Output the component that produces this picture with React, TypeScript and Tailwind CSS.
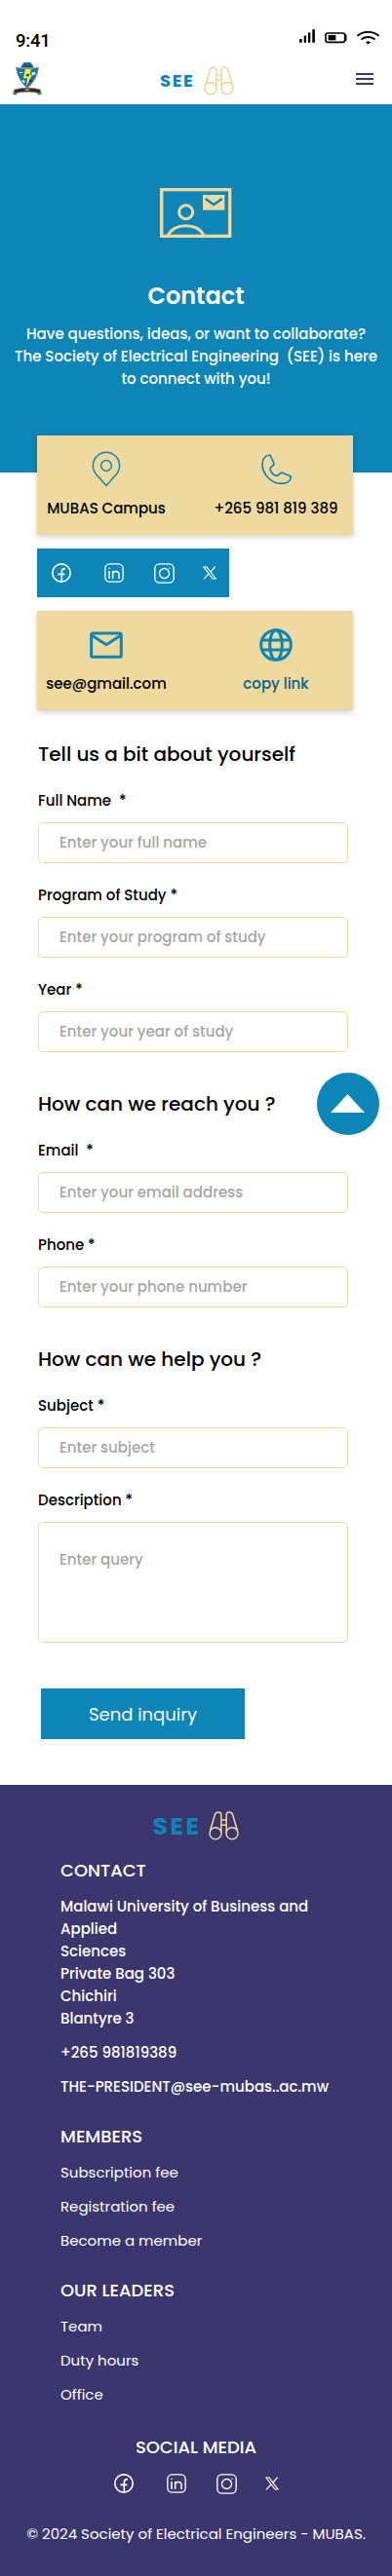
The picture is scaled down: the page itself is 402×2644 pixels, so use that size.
import type { ReactNode } from "react";

function Binoculars({ className, weight }: { className: string; weight: number }) {
  return (
    <svg viewBox="0 0 92 90" className={className} fill="none" stroke="#eed99f" strokeWidth={weight} strokeLinejoin="round">
      <path d="M4 60 19 10C21 4 26 3 30 3c6 0 8 4 8 9v55M88 60 73 10C71 4 66 3 62 3c-6 0-8 4-8 9v55M38 27h16M38 43h16" />
      <circle cx="20.5" cy="68" r="18" />
      <circle cx="71.5" cy="68" r="18" />
    </svg>
  );
}

function Crest() {
  return (
    <svg viewBox="0 0 88 101" className="h-[34px] w-[30px]">
      <path d="M1 88l11-3v14H1zM87 88l-11-3v14h11z" fill="#2378ad" />
      <path d="M34 0h20l4 6 7 11H23l7-11z" fill="#1673b4" />
      <path d="M30 8h28M27 13h34" stroke="#174d76" strokeWidth="3" />
      <path d="M10 15c20 6 48 6 68 0-2 24-14 47-34 64C24 62 12 39 10 15z" fill="#1173b8" stroke="#c08a4e" strokeWidth="2.5" />
      <path d="M38 21h18l-5 17h8L41 73l3-25H32z" fill="#f5ee2a" />
      <circle cx="45" cy="39" r="4" fill="#22364a" />
      <path d="M20 31h10M58 33l8-3 2 5-7 3zM30 55l5 2v4l-5-2z" stroke="#e4e9ec" strokeWidth="3" fill="#e4e9ec" />
      <path d="M51 52l8 2-4 7-5-2z" fill="#17334b" />
      <path d="M4 83q40-11 80 0v12q-40-11-80 0z" fill="#2d2b2b" stroke="#b98a5c" strokeWidth="2" />
      <text x="44" y="87" textAnchor="middle" fontSize="7" fontWeight="700" fill="#d8d8d8" fontFamily="Inter, sans-serif">
        SEE
      </text>
    </svg>
  );
}

function SocialIcons() {
  return (
    <div className="flex items-center">
      <svg viewBox="0 0 60 60" className="h-5 w-5" fill="none" stroke="#fff">
        <circle cx="30" cy="30" r="27.500" strokeWidth="5" />
        <path d="M31 58V27c0-7 3-10 11-10M19 34h21" strokeWidth="5" />
      </svg>
      <svg viewBox="0 0 60 60" className="ml-[34px] h-5 w-5" fill="none" stroke="#fff" strokeWidth="4">
        <rect x="2.5" y="2.5" width="55" height="55" rx="14" />
        <path d="M15 24v24M26 48V24M26 34c0-11 19-11 19 0v14" strokeWidth="4.500" />
        <circle cx="15" cy="16" r="2" fill="#fff" strokeWidth="1" />
      </svg>
      <svg viewBox="0 0 63 63" className="ml-[31px] h-[21px] w-[21px]" fill="none" stroke="#fff" strokeWidth="4">
        <rect x="2.5" y="2.5" width="58" height="58" rx="14" />
        <circle cx="31.5" cy="31.5" r="15" />
        <circle cx="48" cy="15.500" r="2" fill="#fff" strokeWidth="0.500" />
      </svg>
      <svg viewBox="0 0 42 42" className="ml-[29px] h-3.5 w-3.5" fill="none" stroke="#fff" strokeWidth="3.500">
        <path d="M3 3h9l27 36h-9zM38 2 24 18M18 24 3 40" />
      </svg>
    </div>
  );
}

function CardItem({ icon, children }: { icon: ReactNode; children: ReactNode }) {
  return (
    <div className="flex w-[142px] flex-col items-center">
      <div className="flex h-[68px] items-center pt-[1px]">{icon}</div>
      <div className="-mt-[5px] font-medium whitespace-nowrap">{children}</div>
    </div>
  );
}

function Card({ children }: { children: ReactNode }) {
  return (
    <div className="flex h-[102px] w-[324px] gap-8 bg-[#eed99f] shadow-[0_2px_6px_rgba(0,0,0,0.2)]">{children}</div>
  );
}

function Heading({ children, className }: { children: string; className: string }) {
  return <h2 className={`text-[20px] leading-[30px] font-medium whitespace-nowrap ${className}`}>{children}</h2>;
}

const field =
  "mt-[11px] block w-[318px] rounded-[5px] border border-[#eed99f] bg-white pl-[21px] font-medium outline-none placeholder:text-[#a6a6a6] placeholder:opacity-100";

function Field({ label, hint }: { label: string; hint: string }) {
  return (
    <label className="mt-[21px] block">
      <span className="block font-medium whitespace-pre">{label}</span>
      <input placeholder={hint} className={`h-[42px] pb-[1px] ${field}`} />
    </label>
  );
}

function FooterTitle({ children, className }: { children: string; className: string }) {
  return <h3 className={`text-[18px] leading-[27px] font-medium ${className}`}>{children}</h3>;
}

export default function App() {
  return (
    <div className="relative w-[402px] bg-white font-['Poppins','Inter',sans-serif] text-[15px] leading-[23px] text-black [font-feature-settings:'cv11']">
      <header className="h-[107px]">
        <div className="flex h-[57px] items-start justify-between pr-[13px] pl-[16px]">
          <span className="mt-[31px] font-['Roboto',sans-serif] text-[18.500px] font-medium tracking-[-0.200px]">9:41</span>
          <div className="mt-[30px] flex items-start">
            <svg viewBox="0 0 48 44" className="h-[14.500px] w-4" fill="#000">
              <rect y="30" width="8" height="12" rx="2" />
              <rect x="14" y="20" width="7" height="22" rx="2" />
              <rect x="27" y="10" width="7" height="32" rx="2" />
              <rect x="40" width="8" height="42" rx="2" />
            </svg>
            <svg viewBox="0 0 69 36" className="mt-[3px] ml-[10px] h-3 w-[23px]" fill="none" stroke="#000">
              <rect x="3" y="3" width="59" height="28" rx="6" strokeWidth="5" />
              <rect x="11" y="9" width="23" height="16" fill="#000" stroke="none" />
              <path d="M65 9v16" strokeWidth="5" strokeLinecap="round" />
            </svg>
            <svg viewBox="0 0 68 41" className="mt-[2px] ml-[10px] h-[13.700px] w-[23px]" fill="none" stroke="#000" strokeWidth="6" strokeLinecap="round">
              <path d="M3 13C20-1 48-1 65 13M15 24c11-8 27-8 38 0" />
              <path d="M27 34q7-5 14 0l-7 6z" fill="#000" strokeWidth="1" />
            </svg>
          </div>
        </div>
        <div className="flex h-[50px] items-start pr-[19px] pl-[13px]">
          <div className="mt-[7px] w-[30px]">
            <Crest />
          </div>
          <span className="mt-[14px] ml-[121px] w-9 text-[18px] font-bold tracking-[1.600px] text-[#0d85b7]">SEE</span>
          <Binoculars className="mt-[10.500px] ml-[9px] h-[30px] w-[31px]" weight={5} />
          <div className="mt-[18px] ml-auto flex w-[18px] flex-col gap-[3px]">
            <div className="h-[2px] bg-[#3b366d]" />
            <div className="h-[2px] bg-[#3b366d]" />
            <div className="h-[2px] bg-[#3b366d]" />
          </div>
        </div>
      </header>

      <section className="flex h-[378px] flex-col items-center bg-[#0d85b7] pt-[86px] text-white">
        <svg viewBox="0 0 220 153" className="h-[51px] w-[73.400px]" fill="none" stroke="#eed99f">
          <rect x="5" y="5" width="210" height="143" strokeWidth="10" />
          <circle cx="80" cy="74" r="21" strokeWidth="9" />
          <path d="M24 146c10-19 31-30 56-30s46 11 56 30" strokeWidth="9" />
          <rect x="132" y="21" width="67" height="47" fill="#eed99f" stroke="none" />
          <path d="m140 33 25.500 18L191 33" stroke="#0d85b7" strokeWidth="7" />
        </svg>
        <h1 className="mt-[42px] text-[24px] leading-9 font-semibold">Contact</h1>
        <p className="mt-[9px] flex flex-col items-center font-medium whitespace-pre">
          <span>Have questions, ideas, or want to collaborate?</span>
          <span>{"The Society of Electrical Engineering  (SEE) is here"}</span>
          <span>to connect with you!</span>
        </p>
      </section>

      <main className="relative -mt-[38px] pl-[38px]">
        <Card>
          <CardItem
            icon={
              <svg viewBox="0 0 30 37" className="h-[37px] w-[30px]" fill="none" stroke="#0d85b7" strokeWidth="1.500" strokeLinejoin="round">
                <path d="M15 35.500 4.600 23.700A13.600 13.600 0 1 1 25.400 23.700Z" />
                <circle cx="15" cy="15" r="5.400" />
              </svg>
            }
          >
            MUBAS Campus
          </CardItem>
          <CardItem
            icon={
              <svg viewBox="0 0 93 93" className="h-[31px] w-[31px]" fill="none" stroke="#0d85b7" strokeWidth="5" strokeLinejoin="round">
                <path d="M27 3 40 31C35 38 26 42 27 47c3 10 11 19 20 20 6 0 10-9 16-10l28 12C91 82 80 91 62 91 30 91 3 62 3 31 3 14 14 3 27 3Z" />
              </svg>
            }
          >
            +265 981 819 389
          </CardItem>
        </Card>
        <div className="mt-[14px] flex h-[50px] w-[197px] items-center bg-[#0d85b7] pl-[15px]">
          <SocialIcons />
        </div>
        <div className="mt-[14px]">
          <Card>
            <CardItem
              icon={
                <svg viewBox="0 0 102 84" className="h-7 w-[34px]" fill="none" stroke="#0d85b7" strokeWidth="9" strokeLinejoin="round">
                  <rect x="5" y="6" width="92" height="73" rx="5" />
                  <path d="m7 13 44 28 44-28" />
                </svg>
              }
            >
              see@gmail.com
            </CardItem>
            <CardItem
              icon={
                <svg viewBox="0 0 102 102" className="h-[34px] w-[34px]" fill="none" stroke="#0d85b7" strokeWidth="9">
                  <circle cx="51" cy="51" r="46" />
                  <ellipse cx="51" cy="51" rx="19" ry="46" />
                  <path d="M9 36h84M9 66h84" />
                </svg>
              }
            >
              <span className="text-[#0b5f83]">copy link</span>
            </CardItem>
          </Card>
        </div>

        <form className="pl-[1px]">
          <Heading className="mt-[30px]">Tell us a bit about yourself</Heading>
          <Field label={"Full Name  *"} hint="Enter your full name" />
          <Field label="Program of Study *" hint="Enter your program of study" />
          <Field label="Year *" hint="Enter your year of study" />

          <Heading className="mt-[38px]">How can we reach you ?</Heading>
          <Field label={"Email  *"} hint="Enter your email address" />
          <Field label="Phone *" hint="Enter your phone number" />

          <Heading className="mt-[38px]">How can we help you ?</Heading>
          <Field label="Subject *" hint="Enter subject" />
          <label className="mt-[21px] block">
            <span className="block font-medium">Description *</span>
            <textarea placeholder="Enter query" className={`h-[124px] resize-none pt-[26px] ${field}`} />
          </label>
          <button type="button" className="mt-[47px] ml-[3px] block h-[52px] w-[209px] bg-[#0d85b7] text-[18px] text-white">
            Send inquiry
          </button>
        </form>
      </main>

      <button type="button" aria-label="Back to top" className="absolute top-[1101px] right-[13px] flex h-16 w-16 justify-center rounded-full bg-[#0d85b7]">
        <svg viewBox="0 0 35 19" className="mt-[22px] -ml-[1px] h-[19px] w-[35px]" fill="#fff">
          <path d="M17.500 0 35 19H0z" />
        </svg>
      </button>

      <footer className="mt-[47px] h-[812px] bg-[#3b366d] pt-[27px] text-white">
        <div className="flex h-[30px] items-center justify-center">
          <span className="text-[25px] font-bold tracking-[2.500px] text-[#0d85b7]">SEE</span>
          <Binoculars className="ml-2 h-[30px] w-[31px]" weight={4.5} />
        </div>
        <div className="pl-[62px] font-medium whitespace-nowrap">
          <FooterTitle className="mt-[17px]">CONTACT</FooterTitle>
          <address className="mt-3 flex flex-col items-start not-italic">
            <span>Malawi University of Business and</span>
            <span>Applied</span>
            <span>Sciences</span>
            <span>Private Bag 303</span>
            <span>Chichiri</span>
            <span>Blantyre 3</span>
          </address>
          <p className="mt-3">+265 981819389</p>
          <p className="mt-3">THE-PRESIDENT@see-mubas..ac.mw</p>
          <FooterTitle className="mt-[26px]">MEMBERS</FooterTitle>
          <ul className="mt-3 flex flex-col gap-3 font-normal">
            <li>Subscription fee</li>
            <li>Registration fee</li>
            <li>Become a member</li>
          </ul>
          <FooterTitle className="mt-[26px]">OUR LEADERS</FooterTitle>
          <ul className="mt-3 flex flex-col gap-3 font-normal">
            <li>Team</li>
            <li>Duty hours</li>
            <li>Office</li>
          </ul>
        </div>
        <FooterTitle className="mt-[29px] text-center">SOCIAL MEDIA</FooterTitle>
        <div className="mt-[14px] flex h-5 items-center pl-[117px]">
          <SocialIcons />
        </div>
        <p className="mt-[30px] text-center whitespace-nowrap">© 2024 Society of Electrical Engineers - MUBAS.</p>
      </footer>
    </div>
  );
}
